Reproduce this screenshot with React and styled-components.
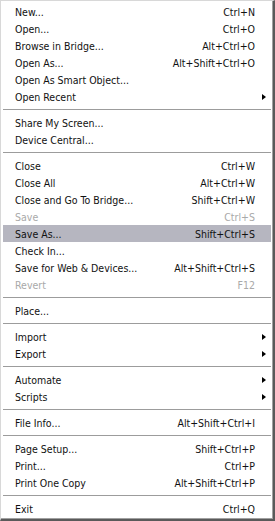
import React from "react";
import styled, { createGlobalStyle } from "styled-components";

const Global = createGlobalStyle`
  html, body { margin: 0; padding: 0; background: #ffffff; }
  body { width: 275px; height: 521px; overflow: hidden; }
`;

const Menu = styled.div`
  box-sizing: border-box;
  width: 275px;
  height: 521px;
  background: #ffffff;
  border-top: 1px solid #d8d8d8;
  border-left: 1px solid #d8d8d8;
  border-right: 2px solid #5a5a5a;
  border-bottom: 2px solid #5a5a5a;
  box-shadow: inset -1px -1px 0 #a0a0a0;
  padding: 2px 1px 2px 1px;
  display: flex;
  flex-direction: column;
  font-family: Tahoma, "DejaVu Sans Condensed", "Liberation Sans", sans-serif;
  font-size: 10.5px;
  color: #111111;
`;

const Item = styled.div`
  display: grid;
  grid-template-columns: 1fr auto 16px;
  align-items: center;
  height: 17px;
  padding-left: 12px;
  margin: 0 1px;
  background: ${(p) => (p.$active ? "#b6b6c0" : "transparent")};
  color: ${(p) => (p.$disabled ? "#a9a9a9" : "#111111")};
  white-space: nowrap;
`;

const Label = styled.span``;

const Shortcut = styled.span`
  text-align: right;
`;

const Arrow = styled.span`
  justify-self: center;
  width: 0;
  height: 0;
  border-left: 4px solid #000;
  border-top: 3.5px solid transparent;
  border-bottom: 3.5px solid transparent;
  margin-left: 2px;
`;

const Separator = styled.div`
  height: 9px;
  display: flex;
  align-items: center;
  &::before {
    content: "";
    flex: 1;
    height: 1px;
    background: #9c9c9c;
    margin: 0 1px;
  }
`;

const items = [
  ["New...", "Ctrl+N"],
  ["Open...", "Ctrl+O"],
  ["Browse in Bridge...", "Alt+Ctrl+O"],
  ["Open As...", "Alt+Shift+Ctrl+O"],
  ["Open As Smart Object..."],
  ["Open Recent", null, { sub: true }],
  "-",
  ["Share My Screen..."],
  ["Device Central..."],
  "-",
  ["Close", "Ctrl+W"],
  ["Close All", "Alt+Ctrl+W"],
  ["Close and Go To Bridge...", "Shift+Ctrl+W"],
  ["Save", "Ctrl+S", { disabled: true }],
  ["Save As...", "Shift+Ctrl+S", { active: true }],
  ["Check In..."],
  ["Save for Web & Devices...", "Alt+Shift+Ctrl+S"],
  ["Revert", "F12", { disabled: true }],
  "-",
  ["Place..."],
  "-",
  ["Import", null, { sub: true }],
  ["Export", null, { sub: true }],
  "-",
  ["Automate", null, { sub: true }],
  ["Scripts", null, { sub: true }],
  "-",
  ["File Info...", "Alt+Shift+Ctrl+I"],
  "-",
  ["Page Setup...", "Shift+Ctrl+P"],
  ["Print...", "Ctrl+P"],
  ["Print One Copy", "Alt+Shift+Ctrl+P"],
  "-",
  ["Exit", "Ctrl+Q"],
];

export default function App() {
  return (
    <>
      <Global />
      <Menu>
        {items.map((it, i) => {
          if (it === "-") return <Separator key={i} />;
          const [label, sc, opts = {}] = it;
          return (
            <Item key={i} $active={opts.active} $disabled={opts.disabled}>
              <Label>{label}</Label>
              <Shortcut>{sc || ""}</Shortcut>
              {opts.sub ? <Arrow /> : <span />}
            </Item>
          );
        })}
      </Menu>
    </>
  );
}
